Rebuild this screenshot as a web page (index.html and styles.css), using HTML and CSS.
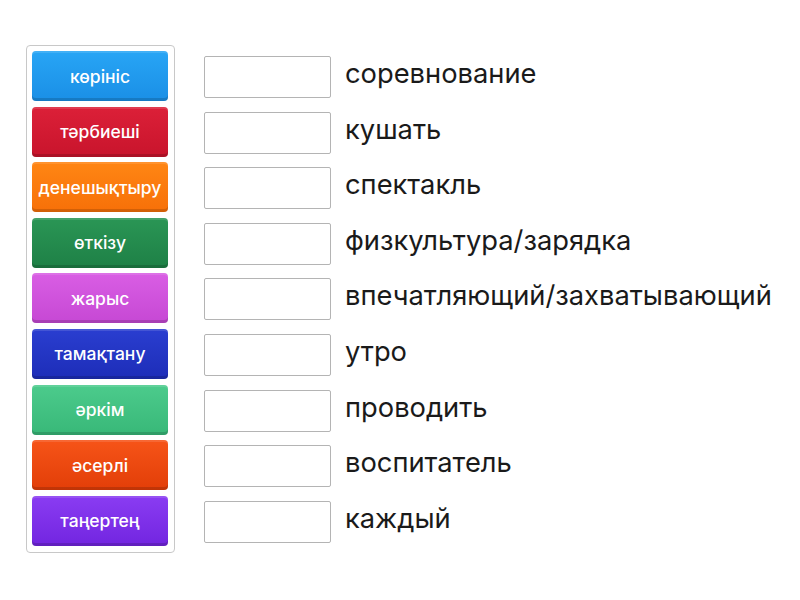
FILE: index.html
```html
<!DOCTYPE html>
<html>
<head>
<meta charset="utf-8">
<link rel="stylesheet" href="styles.css">
</head>
<body>
<div class="page">
  <div class="bank">
    <div class="tile c1">көрініс</div>
    <div class="tile c2">тәрбиеші</div>
    <div class="tile c3">денешықтыру</div>
    <div class="tile c4">өткізу</div>
    <div class="tile c5">жарыс</div>
    <div class="tile c6">тамақтану</div>
    <div class="tile c7">әркім</div>
    <div class="tile c8">әсерлі</div>
    <div class="tile c9">таңертең</div>
  </div>
  <div class="rows">
    <div class="row"><div class="slot"></div><div class="label">соревнование</div></div>
    <div class="row"><div class="slot"></div><div class="label">кушать</div></div>
    <div class="row"><div class="slot"></div><div class="label">спектакль</div></div>
    <div class="row"><div class="slot"></div><div class="label">физкультура/зарядка</div></div>
    <div class="row"><div class="slot"></div><div class="label">впечатляющий/захватывающий</div></div>
    <div class="row"><div class="slot"></div><div class="label">утро</div></div>
    <div class="row"><div class="slot"></div><div class="label">проводить</div></div>
    <div class="row"><div class="slot"></div><div class="label">воспитатель</div></div>
    <div class="row"><div class="slot"></div><div class="label">каждый</div></div>
  </div>
</div>
</body>
</html>
```
FILE: styles.css
```css
html, body { margin: 0; padding: 0; background: #fff; }
body { font-family: Inter, Roboto, "Liberation Sans", sans-serif; }
.page {
  display: flex;
  align-items: flex-start;
  padding: 45px 0 0 26px;
  gap: 29px;
}
.bank {
  border: 1px solid #c8c8c8;
  border-radius: 4px;
  padding: 5px 6px 6px 5px;
  display: flex;
  flex-direction: column;
  gap: 5.6px;
}
.tile {
  width: 136px;
  height: 50px;
  border-radius: 4px;
  color: #fff;
  font-size: 17.5px;
  font-weight: 500;
  display: flex;
  align-items: center;
  justify-content: center;
  white-space: nowrap;
  box-shadow: inset 0 -3px 0 rgba(0,0,0,0.15), inset 0 2px 0 rgba(255,255,255,0.12);
}
.c1 { background: linear-gradient(#28a5f5, #1a8fe6); }
.c2 { background: linear-gradient(#dc2038, #c8142c); }
.c3 { background: linear-gradient(#ff8614, #f77008); }
.c4 { background: linear-gradient(#2a9655, #1e8046); }
.c5 { background: linear-gradient(#d95ee4, #c648d4); }
.c6 { background: linear-gradient(#2a3ed0, #1d2db8); }
.c7 { background: linear-gradient(#4ccb8c, #38b878); }
.c8 { background: linear-gradient(#f65418, #e23e08); }
.c9 { background: linear-gradient(#8a3cf2, #7225e0); }
.rows {
  display: flex;
  flex-direction: column;
  gap: 13.6px;
  padding-top: 11px;
}
.row {
  display: flex;
  align-items: center;
  gap: 14px;
  height: 42px;
}
.slot {
  width: 125px;
  height: 40px;
  border: 1px solid #b4b4b4;
  border-radius: 2px;
  background: #fff;
  flex: none;
}
.label {
  font-size: 27.3px;
  color: #1a1a1a;
  white-space: nowrap;
  margin-top: -7px;
}
```
